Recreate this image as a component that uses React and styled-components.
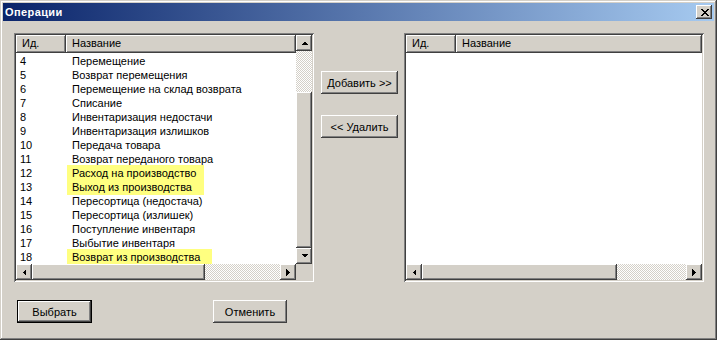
import React from "react";
import styled, { createGlobalStyle, css } from "styled-components";

const FACE = "#d4d0c8";
const SHADOW = "#808080";
const DARK = "#404040";

const GlobalStyle = createGlobalStyle`
  html, body {
    margin: 0;
    padding: 0;
    background: ${FACE};
  }
  body {
    font-family: "Liberation Sans", Arial, sans-serif;
    font-size: 11px;
    color: #000;
  }
  * {
    box-sizing: border-box;
  }
`;

const raised = css`
  background: ${FACE};
  box-shadow: inset -1px -1px ${DARK}, inset 1px 1px #fff,
    inset -2px -2px ${SHADOW}, inset 2px 2px ${FACE};
`;

const dither = css`
  background-color: #fff;
  background-image: repeating-conic-gradient(${FACE} 0 25%, #fff 0 50%);
  background-size: 2px 2px;
`;

const rows = [
  { id: 4, name: "Перемещение" },
  { id: 5, name: "Возврат перемещения" },
  { id: 6, name: "Перемещение на склад возврата" },
  { id: 7, name: "Списание" },
  { id: 8, name: "Инвентаризация недостачи" },
  { id: 9, name: "Инвентаризация излишков" },
  { id: 10, name: "Передача товара" },
  { id: 11, name: "Возврат переданого товара" },
  { id: 12, name: "Расход на производство", hl: 137 },
  { id: 13, name: "Выход из производства", hl: 137 },
  { id: 14, name: "Пересортица (недостача)" },
  { id: 15, name: "Пересортица (излишек)" },
  { id: 16, name: "Поступление инвентаря" },
  { id: 17, name: "Выбытие инвентаря" },
  { id: 18, name: "Возврат из производства", hl: 145 },
];

const Arrow = ({ dir }) => {
  const shapes = {
    up: "M0 4 H7 L3.5 0.5 Z",
    down: "M0 0 H7 L3.5 3.5 Z",
    left: "M4 0 V7 L0.5 3.5 Z",
    right: "M0 0 V7 L3.5 3.5 Z",
  };
  const vertical = dir === "up" || dir === "down";
  return (
    <svg
      width={vertical ? 7 : 4}
      height={vertical ? 4 : 7}
      viewBox={vertical ? "0 0 7 4" : "0 0 4 7"}
      shapeRendering="crispEdges"
    >
      <path d={shapes[dir]} fill="#000" />
    </svg>
  );
};

const CloseGlyph = () => (
  <svg width="8" height="7" viewBox="0 0 8 7" shapeRendering="crispEdges">
    {[0, 1, 2, 3, 4, 5, 6].map((i) => (
      <g key={i} fill="#000">
        <rect x={i} y={i} width="2" height="1" />
        <rect x={6 - i} y={i} width="2" height="1" />
      </g>
    ))}
  </svg>
);

const ScrollBar = ({ vertical, before, thumb }) => (
  <Bar $vertical={vertical}>
    <ArrowButton>
      <Arrow dir={vertical ? "up" : "left"} />
    </ArrowButton>
    <Track $size={before} />
    <Thumb $size={thumb} />
    <Track $grow />
    <ArrowButton>
      <Arrow dir={vertical ? "down" : "right"} />
    </ArrowButton>
  </Bar>
);

const ListHeader = () => (
  <Header>
    <HeaderCell $width={50}>Ид.</HeaderCell>
    <HeaderCell $grow>Название</HeaderCell>
  </Header>
);

const App = () => {
  return (
    <>
      <GlobalStyle />
      <Window>
        <TitleBar>
          <Title>Операции</Title>
          <CloseButton>
            <CloseGlyph />
          </CloseButton>
        </TitleBar>
        <Body>
          <Main>
            <ListView $withVScroll>
              <ListContent>
                <ListHeader />
                <Rows>
                  {rows.map((row) => (
                    <Row key={row.id}>
                      <IdCell>{row.id}</IdCell>
                      <NameCell $hl={row.hl}>{row.name}</NameCell>
                    </Row>
                  ))}
                </Rows>
              </ListContent>
              <ScrollBar vertical before={41} thumb={156} />
              <ScrollBar before={0} thumb={173} />
              <Corner />
            </ListView>
            <ActionColumn>
              <Button>Добавить &gt;&gt;</Button>
              <Button>&lt;&lt; Удалить</Button>
            </ActionColumn>
            <ListView>
              <ListContent>
                <ListHeader />
              </ListContent>
              <ScrollBar before={0} thumb={195} />
            </ListView>
          </Main>
          <Footer>
            <Button $default $width={75}>
              Выбрать
            </Button>
            <Button $width={74}>Отменить</Button>
          </Footer>
        </Body>
      </Window>
    </>
  );
};

export default App;

const Window = styled.div`
  width: 717px;
  height: 340px;
  padding: 3px;
  background: ${FACE};
  display: flex;
  flex-direction: column;
  box-shadow: inset -1px -1px ${DARK}, inset 1px 1px ${FACE},
    inset -2px -2px ${SHADOW}, inset 2px 2px #fff;
`;

const TitleBar = styled.div`
  height: 18px;
  display: flex;
  align-items: center;
  justify-content: space-between;
  padding: 0 2px 0 2px;
  background: linear-gradient(to right, #0a246a, #a6caf0);
`;

const Title = styled.span`
  color: #fff;
  font-weight: bold;
  font-size: 11px;
  letter-spacing: 0.4px;
`;

const CloseButton = styled.div`
  ${raised};
  width: 16px;
  height: 14px;
  display: flex;
  align-items: center;
  justify-content: center;
  padding-left: 1px;
`;

const Body = styled.div`
  flex: 1;
  padding: 12px 10px 0 11px;
  display: flex;
  flex-direction: column;
`;

const Main = styled.div`
  display: flex;
  height: 249px;
`;

const ListView = styled.div`
  width: 300px;
  height: 249px;
  padding: 2px;
  background: #fff;
  display: grid;
  grid-template-columns: ${(p) => (p.$withVScroll ? "1fr 16px" : "1fr")};
  grid-template-rows: 229px 16px;
  box-shadow: inset 1px 1px ${SHADOW}, inset -1px -1px #fff,
    inset 2px 2px ${DARK}, inset -2px -2px ${FACE};
`;

const ListContent = styled.div`
  overflow: hidden;
  background: #fff;
  min-width: 0;
`;

const Header = styled.div`
  display: flex;
  height: 18px;
`;

const HeaderCell = styled.div`
  ${(p) => (p.$grow ? "flex: 1;" : `width: ${p.$width}px;`)}
  line-height: 17px;
  padding-left: 6px;
  background: ${FACE};
  box-shadow: inset -1px -1px ${DARK}, inset 1px 1px #fff,
    inset -2px -2px ${SHADOW};
  white-space: nowrap;
`;

const Rows = styled.div`
  display: flex;
  flex-direction: column;
  padding-top: 1px;
`;

const Row = styled.div`
  display: flex;
  height: 14px;
  line-height: 14px;
  white-space: nowrap;
`;

const IdCell = styled.div`
  width: 50px;
  padding-left: 4px;
`;

const NameCell = styled.div`
  margin-left: 1px;
  padding-left: 5px;
  ${(p) =>
    p.$hl &&
    css`
      width: ${p.$hl}px;
      background: #ffff80;
      box-shadow: 0 1px 0 #ffff80, 0 -1px 0 #ffff80;
    `}
`;

const Bar = styled.div`
  display: flex;
  flex-direction: ${(p) => (p.$vertical ? "column" : "row")};
  background: ${FACE};
`;

const ArrowButton = styled.div`
  ${raised};
  flex: 0 0 16px;
  width: 16px;
  height: 16px;
  display: flex;
  align-items: center;
  justify-content: center;
`;

const Track = styled.div`
  ${dither};
  flex: ${(p) => (p.$grow ? "1 1 0" : `0 0 ${p.$size}px`)};
`;

const Thumb = styled.div`
  ${raised};
  flex: 0 0 ${(p) => p.$size}px;
`;

const Corner = styled.div`
  background: ${FACE};
`;

const ActionColumn = styled.div`
  width: 77px;
  margin: 0 6px 0 7px;
  padding-top: 38px;
  display: flex;
  flex-direction: column;
  gap: 21px;
`;

const Button = styled.div`
  ${raised};
  width: ${(p) => (p.$width ? `${p.$width}px` : "77px")};
  height: 23px;
  display: flex;
  align-items: center;
  justify-content: center;
  white-space: nowrap;
  ${(p) =>
    p.$default &&
    css`
      box-shadow: inset 0 0 0 1px #000, inset -2px -2px ${DARK},
        inset 2px 2px #fff, inset -3px -3px ${SHADOW};
    `}
`;

const Footer = styled.div`
  display: flex;
  gap: 121px;
  margin-top: 18px;
  padding-left: 3px;
`;
